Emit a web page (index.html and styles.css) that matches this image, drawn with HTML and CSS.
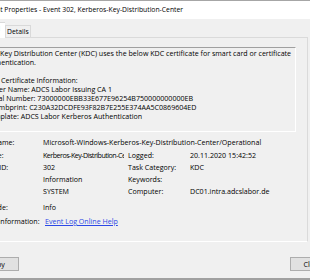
FILE: index.html
```html
<!DOCTYPE html>
<html lang="en">
<head>
    <meta charset="UTF-8">
    <title>Event Properties</title>
    <link rel="stylesheet" href="styles.css">
</head>
<body>
    <div class="window">
        <div class="titlebar">Event Properties - Event 302, Kerberos-Key-Distribution-Center</div>

        <div class="tabs">
            <div class="tab active">General</div>
            <div class="tab">Details</div>
        </div>

        <div class="panel">
            <div class="message">
                <p>The Key Distribution Center (KDC) uses the below KDC certificate for smart card or certificate</p>
                <p>authentication.</p>
                <p>&nbsp;</p>
                <p class="indent">Certificate Information:</p>
                <p>Issuer Name: ADCS Labor Issuing CA 1</p>
                <p>Serial Number: 73000000EBB33E677E96254B750000000000EB</p>
                <p>Thumbprint: C230A32DCDFE93F82B7E255E374AA5C0869604ED</p>
                <p>Template: ADCS Labor Kerberos Authentication</p>
            </div>

            <div class="fields">
                <div class="label">Log Name:</div>
                <div class="value wide">Microsoft-Windows-Kerberos-Key-Distribution-Center/Operational</div>

                <div class="label">Source:</div>
                <div class="value"><span class="clip">Kerberos-Key-Distribution-Center</span></div>
                <div class="label">Logged:</div>
                <div class="value">20.11.2020 15:42:52</div>

                <div class="label">Event ID:</div>
                <div class="value">302</div>
                <div class="label">Task Category:</div>
                <div class="value">KDC</div>

                <div class="label">Level:</div>
                <div class="value">Information</div>
                <div class="label">Keywords:</div>
                <div class="value"></div>

                <div class="label">User:</div>
                <div class="value">SYSTEM</div>
                <div class="label">Computer:</div>
                <div class="value">DC01.intra.adcslabor.de</div>

                <div class="label">OpCode:</div>
                <div class="value wide">Info</div>

                <div class="label">More Information:</div>
                <div class="value wide"><a href="#" class="link">Event Log Online Help</a></div>
            </div>
        </div>

        <div class="buttons">
            <button class="btn">Copy</button>
            <button class="btn">Close</button>
        </div>
    </div>
</body>
</html>
```

FILE: styles.css
```css
* {
    box-sizing: border-box;
}
body {
    margin: 0;
    width: 310px;
    height: 280px;
    overflow: hidden;
    background: #f0f0f0;
    color: #000;
    font-family: "Open Sans", "Noto Sans", sans-serif;
    font-size: 7.1px;
}
.window {
    margin-left: -40px;
    width: 390px;
    height: 280px;
    border-top: 1px solid #a6a6a6;
    border-bottom: 2px solid #a0a0a0;
}
.titlebar {
    height: 18px;
    line-height: 18px;
    padding-left: 25px;
    background: #fff;
    font-size: 6.8px;
    white-space: nowrap;
}
.tabs {
    display: flex;
    align-items: flex-end;
    height: 18px;
    padding-left: 13px;
}
.tab {
    height: 12px;
    line-height: 11px;
    padding: 0 1px;
    border: 1px solid #d9d9d9;
    border-bottom: none;
    background: #f0f0f0;
    font-size: 6.8px;
}
.tab.active {
    position: relative;
    z-index: 1;
    height: 16px;
    width: 32px;
    margin-bottom: -1px;
    background: #fff;
    border-right: none;
}
.panel {
    height: 205px;
    width: 340px;
    margin-left: 8px;
    border: 1px solid #dadada;
    border-bottom-color: #fff;
}
.message {
    height: 85px;
    margin: 9px 11px 0 11px;
    padding: 1px 0 0 5px;
    border-top: 1px solid #a0a0a0;
    border-left: 1px solid #a0a0a0;
    border-right: 1px solid #fff;
    border-bottom: 1px solid #fff;
    line-height: 9px;
    white-space: nowrap;
}
.message p {
    margin: 0;
}
.message .indent {
    padding-left: 15px;
}
.fields {
    display: grid;
    grid-template-columns: 64px 85px 62px 1fr;
    grid-template-rows: 12px 13px 12px 12px 12px 16px 14px;
    align-items: end;
    margin: 4px 0 0 10px;
    line-height: 12px;
    white-space: nowrap;
}
.wide {
    grid-column: 2 / 5;
}
.clip {
    display: block;
    width: 81px;
    overflow: hidden;
    letter-spacing: -0.5px;
}
.link {
    margin-left: 2px;
    color: #2b48e6;
    text-decoration: underline;
}
.buttons {
    display: flex;
    justify-content: space-between;
    padding: 15px 15px 0 14px;
}
.btn {
    width: 45px;
    height: 14px;
    padding: 0;
    border: 1px solid #adadad;
    background: #e1e1e1;
    color: #000;
    font: inherit;
}
```
